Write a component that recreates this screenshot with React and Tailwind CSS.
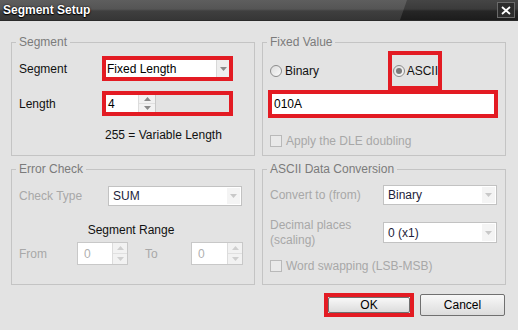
import React from "react";

const RED = "border-[#e31b23]";

function Group({ title, className = "", children }) {
  return (
    <div className={`border border-[#c4c4c4] flex flex-col ${className}`}>
      <span className="-mt-[8px] ml-[4px] px-[3px] self-start bg-[#e3e3e3] leading-[14px] text-[#7b7b7b]">
        {title}
      </span>
      {children}
    </div>
  );
}

function DropArrow({ light }) {
  return (
    <svg width="7" height="4" viewBox="0 0 7 4">
      <path d="M0 0h7L3.5 4z" fill={light ? "#c8c8c8" : "#8a8a8a"} />
    </svg>
  );
}

function Spinner({ light }) {
  const c = light ? "#cfcfcf" : "#8a8a8a";
  return (
    <div className="flex flex-col h-full border-l border-[#dcdcdc] bg-[#f2f2f2]">
      <div className="flex-1 flex items-center justify-center border-b border-[#e0e0e0]">
        <svg width="7" height="4" viewBox="0 0 7 4">
          <path d="M0 4h7L3.5 0z" fill={c} />
        </svg>
      </div>
      <div className="flex-1 flex items-center justify-center">
        <svg width="7" height="4" viewBox="0 0 7 4">
          <path d="M0 0h7L3.5 4z" fill={c} />
        </svg>
      </div>
    </div>
  );
}

function Select({ value, className = "" }) {
  return (
    <div className={`flex border border-[#c2c2c2] bg-white ${className}`}>
      <div className="flex-1 flex items-center pl-[4px] text-[#1d1d3a]">{value}</div>
      <div className="w-[16px] my-[1px] mr-[1px] border-l-[3px] border-white flex items-center justify-center bg-[#f4f4f4]">
        <DropArrow light />
      </div>
    </div>
  );
}

function SpinBox({ className = "" }) {
  return (
    <div className={`flex border border-[#c8c8c8] bg-white ${className}`}>
      <div className="flex-1 flex items-center pl-[6px] text-[#b0b0b0]">0</div>
      <div className="w-[15px]">
        <Spinner light />
      </div>
    </div>
  );
}

function Radio({ checked }) {
  return (
    <span className="w-[12px] h-[12px] rounded-full border border-[#8c8c8c] bg-gradient-to-br from-[#dcdcdc] to-[#fafafa] flex items-center justify-center">
      {checked && <span className="w-[6px] h-[6px] rounded-full bg-[#7a7a7a]" />}
    </span>
  );
}

function Check() {
  return <span className="w-[12px] h-[12px] border border-[#b9b9b9] bg-[#e9e9e9]" />;
}

function Button({ children, className = "" }) {
  return (
    <div
      className={`flex items-center justify-center border border-[#707070] rounded-[2px] bg-gradient-to-b from-[#f8f8f8] to-[#dcdcdc] text-black ${className}`}
    >
      {children}
    </div>
  );
}

export default function App() {
  return (
    <div className="w-[518px] h-[330px] bg-[#e3e3e3] flex flex-col text-[12px] text-[#111] font-['Liberation_Sans',Arial,sans-serif] overflow-hidden">
      {/* title bar */}
      <div className="relative h-[21px] flex items-center pl-[3px] border-b border-[#2a2a2a] bg-[linear-gradient(to_bottom,#5e5e5e_0%,#555_45%,#3f3f3f_55%,#363636_100%)]">
        <div className="absolute inset-y-0 right-0 w-[118px] [clip-path:polygon(7px_0,100%_0,100%_100%,0_100%)] bg-[linear-gradient(to_bottom,#454545_0%,#3b3b3b_45%,#262626_55%,#1c1c1c_100%)]" />
        <span className="relative font-bold text-white [text-shadow:0_0_2px_#000,0_1px_1px_#000]">
          Segment Setup
        </span>
        <div className="absolute right-[3px] top-[2px] w-[18px] h-[16px] border border-[#6a6a6a] bg-[#2c2c2c] flex items-center justify-center">
          <svg width="10" height="9" viewBox="0 0 10 9">
            <path d="M1 1l8 7M9 1L1 8" stroke="#fff" strokeWidth="1.8" />
          </svg>
        </div>
      </div>

      <div className="grid grid-cols-[244px_244px] grid-rows-[114px_116px] gap-x-[7px] gap-y-[13px] pl-[11px] mt-[21px]">
        {/* Segment */}
        <Group title="Segment">
          <div className="flex items-center mt-[7px] pl-[7px] h-[25px]">
            <span className="w-[83px]">Segment</span>
            <div className={`w-[131px] h-[25px] border-4 ${RED} bg-white flex`}>
              <div className="flex-1 flex items-center pl-[1px] text-black">Fixed Length</div>
              <div className="w-[13px] bg-[#eeeeee] border-l border-[#d8d8d8] flex items-center justify-center">
                <DropArrow />
              </div>
            </div>
          </div>
          <div className="flex items-center mt-[10px] pl-[7px] h-[25px]">
            <span className="w-[83px]">Length</span>
            <div className={`w-[131px] h-[25px] border-4 ${RED} flex bg-[#e3e3e3]`}>
              <div className="w-[32px] bg-white flex items-center pl-[2px] text-black">4</div>
              <div className="w-[17px]">
                <Spinner />
              </div>
              <div className="flex-1 border-l border-[#c8c8c8]" />
            </div>
          </div>
          <span className="mt-[12px] pl-[93px] leading-[14px]">255 = Variable Length</span>
        </Group>

        {/* Fixed Value */}
        <Group title="Fixed Value">
          <div className="flex items-center mt-[2px] pl-[7px]">
            <div className="w-[118px] flex items-center gap-[3px]">
              <Radio />
              <span>Binary</span>
            </div>
            <div className={`w-[54px] h-[39px] border-4 ${RED} flex items-center pl-[1px] gap-[2px]`}>
              <Radio checked />
              <span>ASCII</span>
            </div>
          </div>
          <div className={`ml-[5px] w-[230px] h-[28px] border-4 ${RED} bg-white flex items-center pl-[2px] text-black`}>
            010A
          </div>
          <div className="flex items-center mt-[17px] pl-[7px] h-[12px] gap-[4px] text-[#a8a8a8]">
            <Check />
            <span>Apply the DLE doubling</span>
          </div>
        </Group>

        {/* Error Check */}
        <Group title="Error Check">
          <div className="flex items-center mt-[10px] pl-[7px] h-[20px]">
            <span className="w-[89px] text-[#a8a8a8]">Check Type</span>
            <Select value="SUM" className="w-[134px] h-[20px]" />
          </div>
          <span className="mt-[17px] leading-[14px] text-center pr-[4px]">Segment Range</span>
          <div className="flex items-center mt-[5px] pl-[7px] h-[23px] text-[#a8a8a8]">
            <span className="w-[58px]">From</span>
            <SpinBox className="w-[51px] h-[23px]" />
            <span className="ml-[17px] w-[46px]">To</span>
            <SpinBox className="w-[52px] h-[23px]" />
          </div>
        </Group>

        {/* ASCII Data Conversion */}
        <Group title="ASCII Data Conversion">
          <div className="flex items-center mt-[9px] pl-[7px] h-[20px]">
            <span className="w-[113px] text-[#a8a8a8]">Convert to (from)</span>
            <Select value="Binary" className="w-[114px] h-[20px]" />
          </div>
          <div className="flex items-center mt-[17px] pl-[7px] h-[21px]">
            <span className="w-[113px] text-[#a8a8a8] leading-[15px]">
              Decimal places
              <br />
              (scaling)
            </span>
            <Select value="0 (x1)" className="w-[114px] h-[21px]" />
          </div>
          <div className="flex items-center mt-[17px] pl-[7px] h-[12px] gap-[4px] text-[#a8a8a8]">
            <Check />
            <span>Word swapping (LSB-MSB)</span>
          </div>
        </Group>
      </div>

      {/* buttons */}
      <div className="flex items-center justify-end pr-[13px] mt-[8px] gap-[6px]">
        <div className={`w-[90px] h-[24px] border-4 ${RED} flex`}>
          <Button className="flex-1">OK</Button>
        </div>
        <Button className="w-[85px] h-[22px]">Cancel</Button>
      </div>
    </div>
  );
}
